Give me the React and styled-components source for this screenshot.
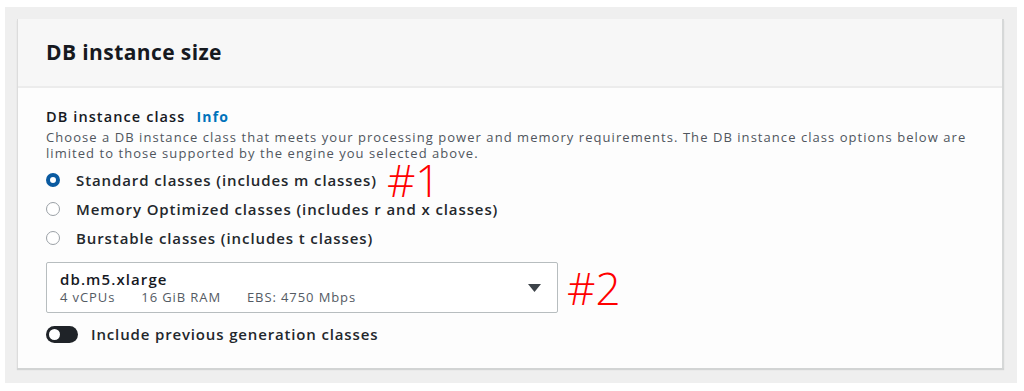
import React from "react";
import styled, { createGlobalStyle } from "styled-components";

const Global = createGlobalStyle`
  html, body { margin: 0; padding: 0; background: #ffffff; }
  body { font-family: "Open Sans", "Noto Sans", sans-serif; color: #16191f; }
`;

const Page = styled.div`
  width: 1024px;
  height: 391px;
  padding: 7px 7px 8px 5px;
  box-sizing: border-box;
`;

const Frame = styled.div`
  background: #efefef;
  padding: 12px 13px 15px 12px;
  box-sizing: border-box;
  height: 376px;
`;

const Card = styled.section`
  background: #fdfdfd;
  height: 349px;
  border-left: 1px solid #dcdcdc;
  border-right: 2px solid #d6d8d8;
  box-shadow: 0 2px 1px 0 #d2d4d4;
  box-sizing: border-box;
  display: flex;
  flex-direction: column;
`;

const Header = styled.header`
  height: 69px;
  background: #f7f7f7;
  border-bottom: 2px solid #ececec;
  box-sizing: border-box;
  display: flex;
  align-items: center;
  padding: 0 0 2px 28px;
`;

const Title = styled.h2`
  margin: 0;
  font-size: 21px;
  font-weight: 700;
  color: #16191f;
  letter-spacing: 0.4px;
`;

const Body = styled.div`
  padding: 19px 28px 0 28px;
  display: flex;
  flex-direction: column;
`;

const LabelRow = styled.div`
  display: flex;
  align-items: baseline;
  gap: 11px;
  line-height: 20px;
`;

const FieldLabel = styled.span`
  font-size: 14.5px;
  font-weight: 600;
  letter-spacing: 1.1px;
  color: #16191f;
`;

const InfoLink = styled.a`
  font-size: 14px;
  font-weight: 700;
  letter-spacing: 1.2px;
  color: #0073bb;
  text-decoration: none;
`;

const Description = styled.p`
  margin: 2px 0 0 0;
  font-size: 13px;
  line-height: 16px;
  letter-spacing: 1.05px;
  color: #50565e;
`;

const RadioGroup = styled.div`
  display: flex;
  flex-direction: column;
  margin-top: 4px;
`;

const RadioRow = styled.label`
  display: flex;
  align-items: center;
  height: 29px;
  gap: 16px;
`;

const RadioCircle = styled.span`
  width: 14px;
  height: 14px;
  border-radius: 50%;
  box-sizing: border-box;
  border: ${(p) => (p.$checked ? "4.5px solid #0a5aa0" : "1.5px solid #9ba1a6")};
  background: #ffffff;
  flex: none;
`;

const RadioText = styled.span`
  font-size: 15px;
  font-weight: 600;
  letter-spacing: 0.9px;
  color: #23272c;
`;

const Annotation = styled.span`
  font-family: "Open Sans", sans-serif;
  font-weight: 300;
  font-size: 44px;
  line-height: 34px;
  height: 34px;
  color: #ff0000;
`;

const AnnotRow = styled.div`
  display: flex;
  align-items: center;
  gap: 10px;
`;

const SelectRow = styled.div`
  display: flex;
  align-items: center;
  gap: 9px;
  margin-top: 10px;
`;

const SelectBox = styled.div`
  width: 512px;
  height: 51px;
  box-sizing: border-box;
  border: 1.5px solid #b7bdbf;
  border-radius: 2px;
  background: #ffffff;
  display: flex;
  align-items: center;
  justify-content: space-between;
  padding: 0 16px 0 13px;
`;

const SelectValue = styled.div`
  display: flex;
  flex-direction: column;
`;

const SelectMain = styled.span`
  font-size: 15px;
  font-weight: 600;
  letter-spacing: 1.1px;
  line-height: 19px;
  color: #16191f;
`;

const SelectTags = styled.div`
  display: flex;
  gap: 26px;
  font-size: 13px;
  letter-spacing: 0.9px;
  line-height: 17px;
  color: #545b64;
`;

const ToggleRow = styled.div`
  display: flex;
  align-items: center;
  gap: 13px;
  margin-top: 11px;
`;

const Toggle = styled.span`
  width: 32px;
  height: 17px;
  border-radius: 9px;
  background: #1f2328;
  display: flex;
  align-items: center;
  padding: 0 3px;
  box-sizing: border-box;
  flex: none;
`;

const Knob = styled.span`
  width: 11px;
  height: 11px;
  border-radius: 50%;
  background: #ffffff;
`;

const ToggleLabel = styled.span`
  font-size: 15px;
  font-weight: 600;
  letter-spacing: 0.85px;
  color: #23272c;
`;

const Caret = () => (
  <svg width="13" height="8" viewBox="0 0 13 8">
    <path d="M0 0 H13 L6.5 8 Z" fill="#3d4349" />
  </svg>
);

const options = [
  { label: "Standard classes (includes m classes)", checked: true, note: "#1" },
  { label: "Memory Optimized classes (includes r and x classes)" },
  { label: "Burstable classes (includes t classes)" },
];

export default function App() {
  return (
    <Page>
      <Global />
      <Frame>
        <Card>
          <Header>
            <Title>DB instance size</Title>
          </Header>
          <Body>
            <LabelRow>
              <FieldLabel>DB instance class</FieldLabel>
              <InfoLink>Info</InfoLink>
            </LabelRow>
            <Description>
              Choose a DB instance class that meets your processing power and memory requirements. The DB instance class options below are limited to those supported by the engine you selected above.
            </Description>
            <RadioGroup>
              {options.map((o) => (
                <RadioRow key={o.label}>
                  <RadioCircle $checked={o.checked} />
                  <AnnotRow>
                    <RadioText>{o.label}</RadioText>
                    {o.note && <Annotation>{o.note}</Annotation>}
                  </AnnotRow>
                </RadioRow>
              ))}
            </RadioGroup>
            <SelectRow>
              <SelectBox>
                <SelectValue>
                  <SelectMain>db.m5.xlarge</SelectMain>
                  <SelectTags>
                    <span>4 vCPUs</span>
                    <span>16 GiB RAM</span>
                    <span>EBS: 4750 Mbps</span>
                  </SelectTags>
                </SelectValue>
                <Caret />
              </SelectBox>
              <Annotation>#2</Annotation>
            </SelectRow>
            <ToggleRow>
              <Toggle>
                <Knob />
              </Toggle>
              <ToggleLabel>Include previous generation classes</ToggleLabel>
            </ToggleRow>
          </Body>
        </Card>
      </Frame>
    </Page>
  );
}
